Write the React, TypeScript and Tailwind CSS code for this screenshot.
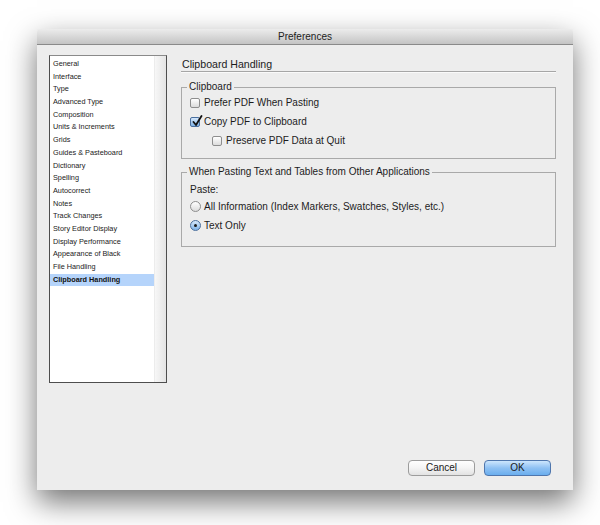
import React from "react";

const categories = [
  "General",
  "Interface",
  "Type",
  "Advanced Type",
  "Composition",
  "Units & Increments",
  "Grids",
  "Guides & Pasteboard",
  "Dictionary",
  "Spelling",
  "Autocorrect",
  "Notes",
  "Track Changes",
  "Story Editor Display",
  "Display Performance",
  "Appearance of Black",
  "File Handling",
  "Clipboard Handling",
];

function Checkbox({ checked = false }: { checked?: boolean }) {
  return (
    <span
      className={`relative inline-block h-[10px] w-[10px] shrink-0 rounded-[2px] border ${
        checked
          ? "border-[#4a6f9e] bg-gradient-to-b from-[#d6e8fb] to-[#7fb3e8]"
          : "border-[#8e8e8e] bg-gradient-to-b from-[#ffffff] to-[#dcdcdc]"
      }`}
    >
      {checked && (
        <svg className="absolute left-[1px] top-[-3px]" width="11" height="12" viewBox="0 0 11 12">
          <path d="M1.5 7 L4 10 L9.5 1" fill="none" stroke="#111" strokeWidth="1.8" strokeLinecap="round" strokeLinejoin="round" />
        </svg>
      )}
    </span>
  );
}

function Radio({ checked = false }: { checked?: boolean }) {
  return (
    <span
      className={`flex h-[11px] w-[11px] shrink-0 items-center justify-center rounded-full border ${
        checked
          ? "border-[#4a6f9e] bg-gradient-to-b from-[#d6e8fb] to-[#7fb3e8]"
          : "border-[#8e8e8e] bg-gradient-to-b from-[#ffffff] to-[#dcdcdc]"
      }`}
    >
      {checked && <span className="h-[3px] w-[3px] rounded-full bg-[#1a1a1a]" />}
    </span>
  );
}

function Button({ label, primary = false }: { label: string; primary?: boolean }) {
  return (
    <button
      className={`flex h-[16px] w-[67px] items-center justify-center rounded-[4px] border text-[10px] leading-none text-[#1a1a1a] ${
        primary
          ? "border-[#4f76ad] bg-gradient-to-b from-[#cde6fd] via-[#8fc1f3] to-[#6aaeee]"
          : "border-[#9c9c9c] bg-gradient-to-b from-[#ffffff] via-[#f4f4f4] to-[#e2e2e2]"
      }`}
    >
      {label}
    </button>
  );
}

export default function App() {
  return (
    <div className="h-[525px] w-[600px] overflow-hidden bg-white pl-[37px] pt-[29px] font-['Liberation_Sans',Arial,sans-serif] text-[#1c1c1c]">
      <div className="flex h-[461px] w-[536px] flex-col bg-[#ededed] shadow-[0_12px_28px_rgba(0,0,0,0.55)]">
        <div className="flex h-[16px] shrink-0 items-center justify-center rounded-t-[4px] border-b border-[#8a8a8a] bg-gradient-to-b from-[#ececec] to-[#c4c4c4] text-[10px] text-[#222]">
          Preferences
        </div>

        <div className="flex flex-1 flex-col px-[12px] pb-[14px] pt-[10px]">
          <div className="flex gap-[14px]">
            <div className="flex h-[328px] w-[118px] shrink-0 border border-[#4e4e4e] border-t-[#8a8a8a] bg-white">
              <ul className="flex-1 pt-[2px]">
                {categories.map((c) => {
                  const active = c === "Clipboard Handling";
                  return (
                    <li
                      key={c}
                      className={`h-[12.7px] pl-[3px] text-[7.3px] leading-[12.7px] whitespace-nowrap ${
                        active ? "bg-[#b5d4fb] font-bold text-[#111]" : "text-[#222]"
                      }`}
                    >
                      {c}
                    </li>
                  );
                })}
              </ul>
              <div className="w-[12px] border-l border-[#ececec] bg-gradient-to-r from-[#f7f7f7] to-[#e4e4e4]" />
            </div>

            <div className="flex w-[375px] flex-col">
              <div className="border-b border-[#a6a6a6] pl-px pt-[2px] text-[10.6px] leading-[14px] shadow-[0_1px_0_#fafafa]">
                Clipboard Handling
              </div>

              <fieldset className="mt-[9px] border border-[#a9a9a9] pb-[8px] pl-[8px]">
                <legend className="ml-[-3px] px-[2px] text-[10px] leading-[12px]">Clipboard</legend>
                <label className="flex h-[19px] items-center gap-[4px] text-[10px]">
                  <Checkbox />
                  Prefer PDF When Pasting
                </label>
                <label className="flex h-[19px] items-center gap-[4px] text-[10px]">
                  <Checkbox checked />
                  Copy PDF to Clipboard
                </label>
                <label className="ml-[22px] flex h-[19px] items-center gap-[4px] text-[10px]">
                  <Checkbox />
                  Preserve PDF Data at Quit
                </label>
              </fieldset>

              <fieldset className="mt-[7px] border border-[#a9a9a9] pb-[11px] pl-[8px]">
                <legend className="ml-[-3px] px-[2px] text-[10px] leading-[12px]">
                  When Pasting Text and Tables from Other Applications
                </legend>
                <div className="mt-[3px] flex h-[16px] items-center text-[10px]">Paste:</div>
                <label className="flex h-[19px] items-center gap-[3px] text-[10px]">
                  <Radio />
                  All Information (Index Markers, Swatches, Styles, etc.)
                </label>
                <label className="flex h-[19px] items-center gap-[3px] text-[10px]">
                  <Radio checked />
                  Text Only
                </label>
              </fieldset>
            </div>
          </div>

          <div className="mt-auto flex justify-end gap-[9px] pr-[10px]">
            <Button label="Cancel" />
            <Button label="OK" primary />
          </div>
        </div>
      </div>
    </div>
  );
}
